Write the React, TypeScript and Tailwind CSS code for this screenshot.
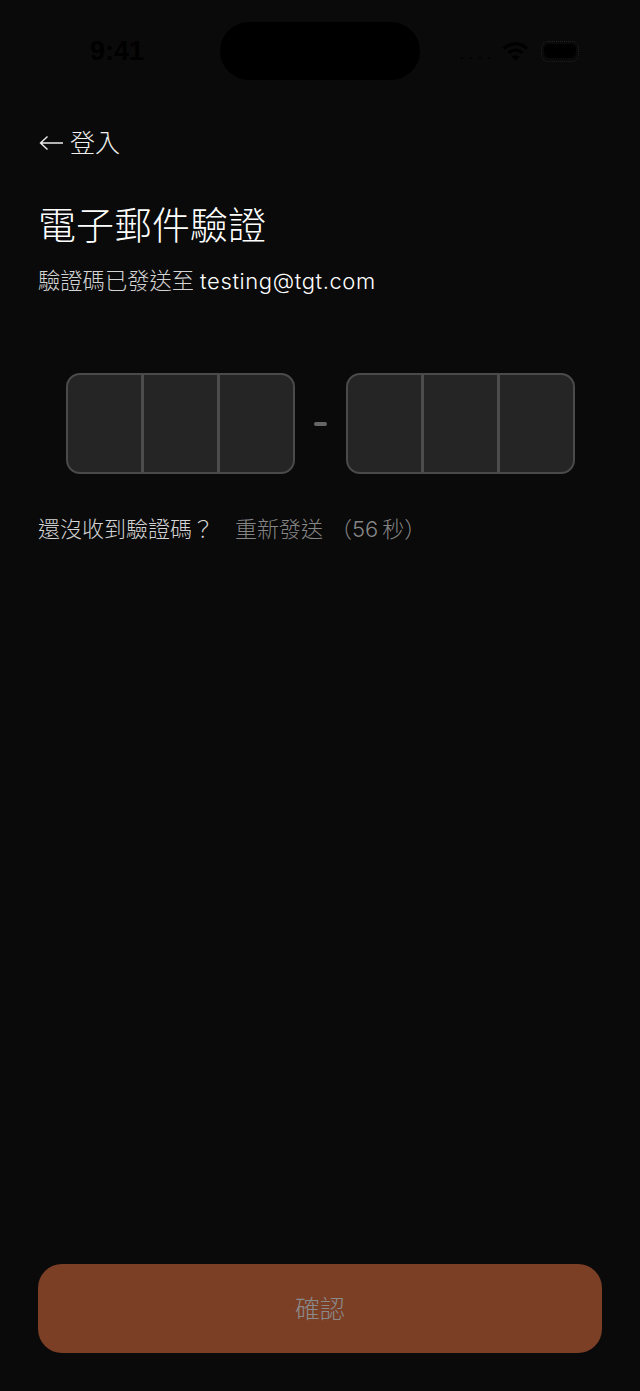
import React from 'react';

const FONT = 'font-["Inter","Noto_Sans_CJK_TC",sans-serif]';

const CodeGroup: React.FC = () => (
  <div className="flex h-[101px] w-[229px] overflow-hidden rounded-[14px] border-2 border-[#4a4a4a] bg-[#252525]">
    <div className="flex-1" />
    <div className="w-[3px] bg-[#4c4c4c]" />
    <div className="flex-1" />
    <div className="w-[3px] bg-[#4c4c4c]" />
    <div className="flex-1" />
  </div>
);

const StatusBar: React.FC = () => (
  <div className="flex h-[58px] items-center pl-[90px] pr-[61px]">
    <span className='w-[130px] font-["Liberation_Sans",sans-serif] text-[27px] font-bold leading-none text-black'>9:41</span>
    <div className="h-[58px] w-[200px] rounded-[29px] bg-black" />
    <div className="flex flex-1 items-center justify-end gap-[12px]">
      <div className="mt-[14px] flex gap-[7px]">
        <span className="h-[2px] w-[2px] rounded-full bg-black" />
        <span className="h-[2px] w-[2px] rounded-full bg-black" />
        <span className="h-[2px] w-[2px] rounded-full bg-black" />
        <span className="h-[2px] w-[2px] rounded-full bg-black" />
      </div>
      <svg width="27" height="22" viewBox="0 0 28 22" fill="none" stroke="#000" strokeWidth="3.4">
        <path d="M2 8.5a17 17 0 0 1 24 0" />
        <path d="M6.8 13a10.2 10.2 0 0 1 14.4 0" />
        <path d="M14 21l-4-4a5.6 5.6 0 0 1 8 0z" fill="#000" stroke="none" />
      </svg>
      <div className="flex h-[21px] w-[38px] items-center justify-center rounded-[7px] border border-dotted border-[#222]">
        <div className="h-[14px] w-[32px] rounded-[5px] bg-black" />
      </div>
    </div>
  </div>
);

export default function App() {
  return (
    <div className={`flex h-[1391px] w-[640px] flex-col bg-[#0a0a0a] pt-[22px] ${FONT}`}>
      <StatusBar />

      <div className="flex flex-1 flex-col px-[38px]">
        <div className="mt-[46px] flex h-[34px] items-center text-[25px] font-light leading-none text-[#f0f0f0]">
          <svg width="25" height="16" viewBox="0 0 25 16" fill="none" stroke="#ececec" strokeWidth="1.4" className="ml-[1px] mr-[6px]">
            <path d="M24 8H1.5M8.5 1.5 1.5 8l7 6.5" />
          </svg>
          <span>登入</span>
        </div>

        <h1 className="mt-[40px] text-[38px] font-light leading-[50px] text-white">電子郵件驗證</h1>

        <p className="mt-[15px] flex items-center text-[22.3px] font-light leading-[32px] text-[#d4d4d4]">
          驗證碼已發送至<span className="ml-[6px] text-[22px] tracking-[0.6px] text-white">testing@tgt.com</span>
        </p>

        <div className="mt-[76px] flex items-center justify-center gap-[19px]">
          <CodeGroup />
          <div className="h-[4px] w-[13px] rounded-[2px] bg-[#666666]" />
          <CodeGroup />
        </div>

        <div className="mt-[38px] flex h-[34px] items-center text-[22px] font-light leading-none">
          <span className="text-[#d4d4d4]">還沒收到驗證碼？</span>
          <span className="ml-[21px] text-[#868686]">重新發送</span>
          <span className="ml-[7px] text-[#868686]">（56<span className="ml-[4px]">秒</span>）</span>
        </div>

        <button type="button" className="mb-[38px] mt-auto h-[89px] w-full rounded-[24px] bg-[#7b3f26] pt-[2px] text-[25px] font-light text-[#8a8a8a]">
          確認
        </button>
      </div>
    </div>
  );
}
